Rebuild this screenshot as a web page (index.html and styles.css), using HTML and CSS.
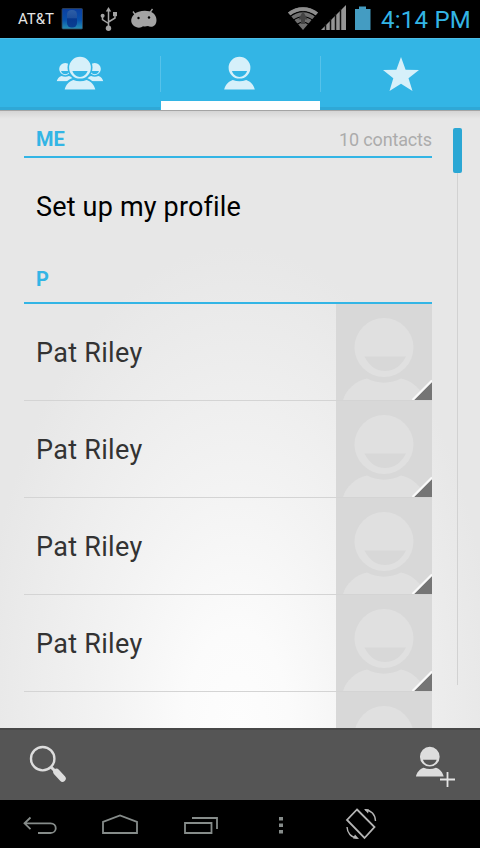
FILE: index.html
```
<!DOCTYPE html>
<html lang="en">
<head>
<meta charset="utf-8">
<title>Contacts</title>
<link rel="stylesheet" href="styles.css">
</head>
<body>
<svg class="defs" width="0" height="0" aria-hidden="true">
  <defs>
    <linearGradient id="app-blue" x1="0" y1="0" x2="0" y2="1"><stop offset="0" stop-color="#0c3fa0"/><stop offset=".55" stop-color="#0750ac"/><stop offset="1" stop-color="#2590b4"/></linearGradient>
    <linearGradient id="pill" x1="0" y1="0" x2="0" y2="1"><stop offset="0" stop-color="#2d5ea6"/><stop offset=".45" stop-color="#1f4f9c"/><stop offset=".5" stop-color="#07388e"/><stop offset="1" stop-color="#0a3f92"/></linearGradient>
    <symbol id="person" viewBox="0 0 32 34">
      <path fill-rule="evenodd" d="M16 .8a10.9 10.9 0 1 1 0 21.8a10.9 10.9 0 0 1 0-21.8zM8.4 15c1.3 3.8 4.3 5.900 7.600 5.900s6.300-2.100 7.600-5.900z"/>
      <path d="M.7 33.600c.9-4.200 4-8.200 8.600-9.600 4.200 1.800 9.200 1.800 13.400 0 4.600 1.400 7.700 5.400 8.600 9.600z"/>
    </symbol>
    <symbol id="avatar" viewBox="0 0 96 96">
      <path fill-rule="evenodd" d="M48 14a29.500 29.500 0 1 1 0 59a29.500 29.500 0 0 1 0-59zM28.500 52.500c4 8.500 11 14.500 20.500 14.500s17-6 21-14.500z"/>
      <path d="M7 96c3-10 12-19 24-21.500 10 5.500 24 5.500 34 0 12 2.500 21 11.500 24 21.500z"/>
      <path class="corner" d="M78 96L96 78V96z"/>
      <path class="corner-edge" d="M76.500 96L96 76.500"/>
    </symbol>
  </defs>
</svg>
<div class="screen">
  <header class="status">
    <span class="carrier">AT&amp;T</span>
    <svg class="notices" viewBox="60 0 100 38">
      <rect x="62" y="8.500" width="20.500" height="20.500" rx="1" fill="url(#app-blue)" stroke="#345" stroke-width=".8"/>
      <rect x="67" y="10" width="10" height="17.500" rx="4.500" fill="url(#pill)"/>
      <g fill="none" stroke="#a3a3a3" stroke-width="1.500"><path d="M108.500 28V10M102.500 15v4.500l6 4M115 14v4l-6.500 4"/></g>
      <g fill="#a3a3a3"><circle cx="108.500" cy="28.300" r="2.700"/><path d="M105.800 11.500l2.700-4.500 2.700 4.500z"/><circle cx="102.600" cy="15.700" r="2"/><path d="M113 12h4v4.200h-4z"/>
      <path d="M134 14.500c4-4 14-5 19-1.500 4 3 4.500 9 2 12-2.500 2.500-5.500 2-7 1-2 .5-3.500.5-5 .2-1.500 1.500-4.500 2-7 .8-6-2.500-6-8.500-2-12.500z"/></g>
      <path d="M135.500 15l-2.500-3.500M150 12.500l2.500-3.500" stroke="#a3a3a3" stroke-width="1.300" fill="none"/>
      <circle cx="138.500" cy="18" r="1.200"/><circle cx="149" cy="17.500" r="1.200"/>
    </svg>
    <svg class="signals" viewBox="284 0 90 38">
      <path d="M288 12.500C297 5.500 309 5.500 318 12.500L303 30z" fill="#6f6f6f"/>
      <g fill="none" stroke="#000" stroke-width="1.200"><path d="M290 16.500c8-6.500 18-6.500 26 0M293 20.500c6-5 14-5 20 0M297 24.500c4-3 8-3 12 0"/></g>
      <path d="M303 11l4.500 8.500H305V24h-4v-4.500h-2.500z" fill="#444"/>
      <path d="M288 12.500C297 5.500 309 5.500 318 12.500l-2.300 2.700c-7.700-6-17.700-6-25.400 0z" fill="#8d8d8d"/>
      <path d="M321 30L346 5V30z" fill="#969696"/>
      <path d="M325.500 30V24M330.500 30V19M335.500 30V14M340.500 30V9" stroke="#111" stroke-width="1.500"/>
      <path d="M355 9h4V6.500h7V9h4.500V30H355z" fill="#449cc2"/>
    </svg>
    <time class="clock">4:14 PM</time>
  </header>
  <nav class="tabs">
    <button class="tab" aria-label="Groups"><svg class="tab-icon" viewBox="0 38 160 72">
      <use href="#person" x="56" y="62.500" width="18.500" height="19"/><use href="#person" x="85.500" y="62.500" width="18.500" height="19"/>
      <circle class="gap" cx="80" cy="67.500" r="12.500"/><path class="gap" d="M62 90c1-6 6-11 11-12h13c6 1 10 6 11 12z"/>
      <use href="#person" x="64" y="56" width="32" height="34"/></svg></button>
    <button class="tab selected" aria-label="All contacts"><svg class="tab-icon" viewBox="160 38 160 72"><use href="#person" x="223.500" y="56" width="32" height="34"/></svg></button>
    <button class="tab" aria-label="Favorites"><svg class="tab-icon" viewBox="320 38 160 72"><path d="M401 57l4.600 12.700 13.400.3-10.500 8.300L412.500 91 401 83.800 389.500 91l3.800-12.700L383 70l13.400-.3z"/></svg></button>
  </nav>
  <main class="contacts">
    <div class="list">
      <h2 class="section"><span>ME</span><span class="count">10 contacts</span></h2>
      <div class="profile">Set up my profile</div>
      <h2 class="section letter">P</h2>
      <div class="row"><span class="name">Pat Riley</span><svg class="photo"><use href="#avatar"/></svg></div>
      <div class="row"><span class="name">Pat Riley</span><svg class="photo"><use href="#avatar"/></svg></div>
      <div class="row"><span class="name">Pat Riley</span><svg class="photo"><use href="#avatar"/></svg></div>
      <div class="row"><span class="name">Pat Riley</span><svg class="photo"><use href="#avatar"/></svg></div>
      <div class="row"><span class="name"></span><svg class="photo"><use href="#avatar"/></svg></div>
    </div>
    <div class="scroll"><div class="thumb"></div><div class="track"></div></div>
  </main>
  <footer class="actions">
    <svg class="action" viewBox="20 728 60 72"><circle cx="42.700" cy="758.700" r="11.700" fill="none" stroke="#ddd" stroke-width="2.400"/><path d="M51 767l4 4" stroke="#ddd" stroke-width="3"/><path d="M56.500 772l6 6.500" stroke="#ddd" stroke-width="6.500" stroke-linecap="round"/></svg>
    <svg class="action" viewBox="400 728 60 72"><g fill="#ddd"><use href="#person" x="415.300" y="746" width="29" height="31"/></g><path d="M439.500 779.500h16M447.500 771.500v16" stroke="#555" stroke-width="4"/><path d="M440 779.500h15M447.500 772v15" stroke="#e4e4e4" stroke-width="1.800"/></svg>
  </footer>
  <nav class="system">
    <svg viewBox="0 800 80 48"><path d="M25 823.300H50.500c7 0 7 9.700 0 9.700H38M30.500 817.500l-6 5.800 6 5.800"/></svg>
    <svg viewBox="80 800 80 48"><path d="M103 833V821.800L120 815.500l17 6.300V833z"/></svg>
    <svg viewBox="160 800 80 48"><path d="M185 823h26.500v10H185zM192 818h25v11"/></svg>
    <svg viewBox="240 800 80 48"><path class="dot" d="M279 817h4v3.500h-4zM279 823.500h4v3.500h-4zM279 830h4v3.500h-4z"/></svg>
    <svg viewBox="320 800 80 48"><g class="rotate"><path d="M357 809.500L374.500 827 364.500 838 347 820z"/><path class="arc" d="M365 809.700c6 .3 10.300 5 10.500 11.300M347 827c.3 6 4 10.500 10 11"/><path class="tip" d="M364 809l5 .5-1 4zM359 839l-6-.5 2-4z"/></g></svg>
  </nav>
</div>
</body>
</html>
```

FILE: styles.css
```
* { box-sizing: border-box; }
body { margin: 0; background: #000; font-family: Roboto, "Liberation Sans", sans-serif; }
.defs { height: 0; }
svg { display: block; flex: none; }
.screen { width: 480px; height: 848px; display: flex; flex-direction: column; overflow: hidden; }

.status { flex: none; height: 38px; background: #000; display: flex; align-items: center; }
.carrier { width: 60px; padding-left: 18px; font-size: 15px; color: #e6e6e6; }
.notices { width: 100px; height: 38px; }
.signals { width: 90px; height: 38px; margin-left: 124px; }
.clock { margin-left: 7px; padding-top: 2px; font-size: 24px; letter-spacing: .25px; color: #33b5e5; white-space: nowrap; }

.tabs { flex: none; height: 72px; display: flex; background: #33b5e5; border-top: 1px solid #4bbde7; }
.tab { position: relative; width: 160px; padding: 0; border: 0; background: none; border-bottom: 3px solid #2fa8d6; height: 71px; }
.tab.selected { width: 159px; margin-left: 1px; border-bottom: 9px solid #fff; }
.tab + .tab::before { content: ""; position: absolute; left: 0; top: 17px; width: 1px; height: 36px; background: #56c2ea; }
.tab.selected::before { left: -1px; }
.tab-icon { width: 160px; height: 72px; margin: -1px 0 -3px; fill: #d6f0fa; }
.tab.selected .tab-icon { margin: -1px 0 -9px -1px; }
.gap { fill: #33b5e5; }

.contacts { flex: none; height: 618px; display: flex; overflow: hidden; border-top: 1px solid #a4a4a4;
  background: linear-gradient(rgba(0,0,0,.08), transparent 8px), radial-gradient(ellipse 265px at 237px 615px, #fdfdfd 0, #e7e7e7 100%);
  background: linear-gradient(rgba(0,0,0,.08), transparent 8px), radial-gradient(260px 480px at 237px 615px, #fdfdfd 0, #fbfbfb 20%, #f3f3f3 50%, #e7e7e7 100%); }
.list { width: 408px; margin-left: 24px; flex: none; }
.section { margin: 0; height: 47px; padding: 10px 0 0 12px; display: flex; justify-content: space-between; align-items: center;
  border-bottom: 2px solid #33b5e5; font-size: 20px; line-height: 24px; font-weight: 700; color: #33b5e5; }
.count { font-size: 18px; letter-spacing: -.15px; font-weight: 400; color: #acacac; padding-top: 2px; }
.profile { height: 96px; padding-left: 12px; font-size: 27px; line-height: 99px; letter-spacing: .18px; color: #000; }
.section.letter { height: 50px; padding-top: 2px; }
.row { height: 97px; display: flex; border-bottom: 1px solid #d4d4d4; }
.name { flex: 1; padding-left: 12px; font-size: 27px; line-height: 99px; letter-spacing: .3px; color: #333; }
.photo { width: 96px; height: 96px; background: #d8d8d8; fill: #e0e0e0; }
.corner { fill: #757575; }
.corner-edge { fill: none; stroke: #fafafa; stroke-width: 2.2; }
.scroll { margin: 17px 0 0 21px; width: 9px; display: flex; flex-direction: column; align-items: center; }
.thumb { width: 9px; height: 45px; border-radius: 2px; background: #2ba7d4; }
.track { width: 1px; height: 512px; background: #d2d2d2; }

.actions { flex: none; height: 72px; padding: 0 20px; display: flex; justify-content: space-between; background: #555; box-shadow: inset 0 2px #484848; }
.action { width: 60px; height: 72px; }
.system { flex: none; height: 48px; display: flex; background: #000; }
.system svg { width: 80px; height: 48px; fill: none; stroke: #868c8a; stroke-width: 1.8; }
.system .dot { fill: #868c8a; stroke: none; }
.system .rotate { stroke: #b5b5b5; }
.system .arc { stroke-width: 1.4; }
.system .tip { fill: #b5b5b5; stroke: none; }
```
